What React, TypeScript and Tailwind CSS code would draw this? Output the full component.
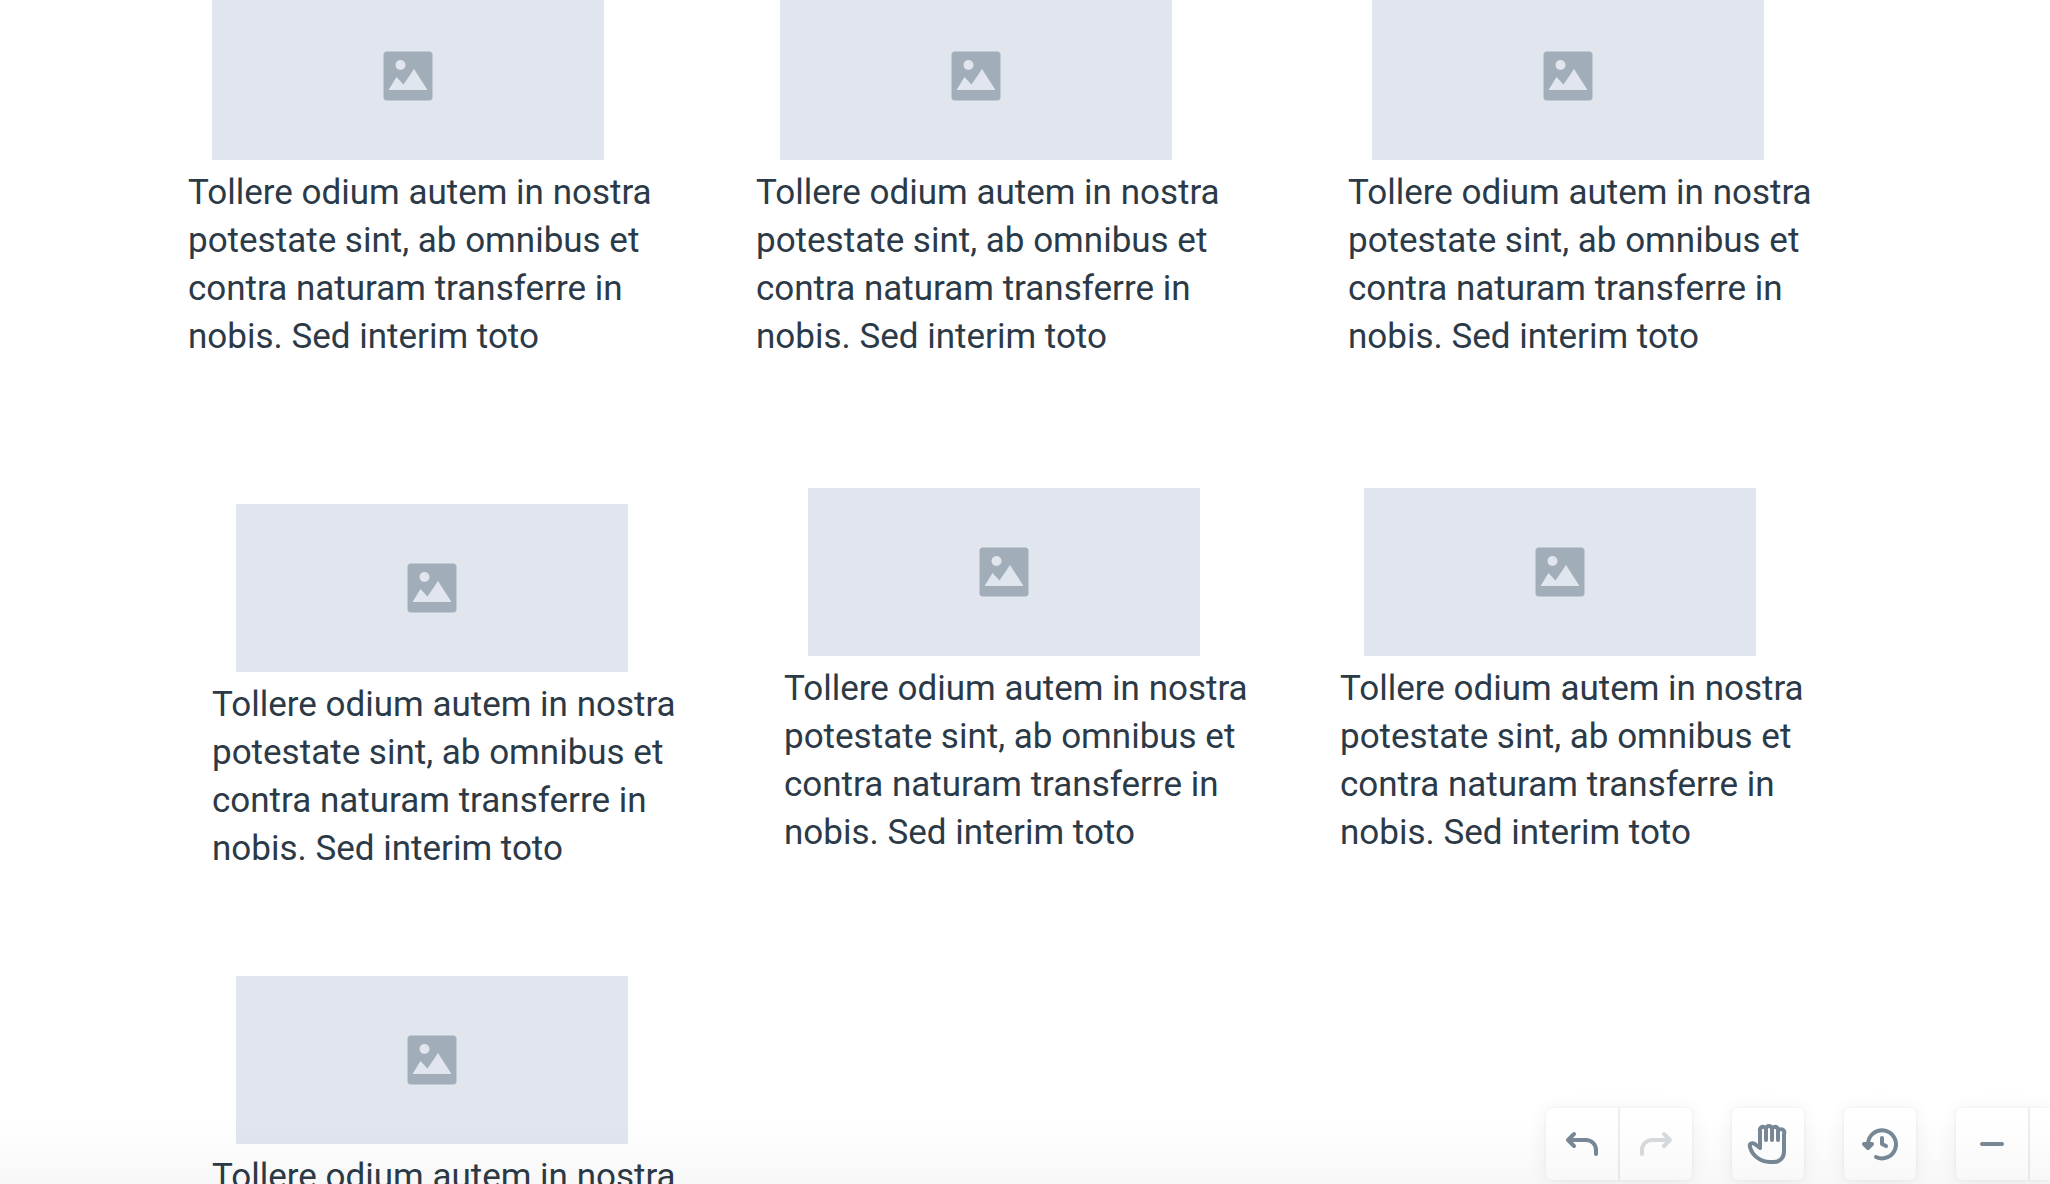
import React from "react";

const cards = [
  { id: 1, place: "left-[188px] -top-2" },
  { id: 2, place: "left-[756px] -top-2" },
  { id: 3, place: "left-[1348px] -top-2" },
  { id: 4, place: "left-[212px] top-[504px]" },
  { id: 5, place: "left-[784px] top-[488px]" },
  { id: 6, place: "left-[1340px] top-[488px]" },
  { id: 7, place: "left-[212px] top-[976px]" },
];

function PictureIcon() {
  return (
    <svg viewBox="0 0 50 50" className="size-[50px]" aria-hidden="true">
      <rect x="0.5" y="0.5" width="49" height="49" rx="3.5" fill="#a1adb8" />
      <circle cx="17.5" cy="14" r="5" fill="#e1e5ed" />
      <path d="M5.5 39 13.5 26 20.5 33.5 31 18 44.5 39Z" fill="#e1e5ed" />
    </svg>
  );
}

function Card({ place }: { place: string }) {
  return (
    <article className={`absolute w-[480px] ${place}`}>
      <div className="ml-6 flex h-[168px] w-[392px] items-center justify-center bg-[#e1e5ed]">
        <PictureIcon />
      </div>
      <p className="mt-[9px] text-[35px] leading-[48px] text-[#2c3a47]">
        Tollere odium autem in nostra potestate sint, ab omnibus et contra naturam transferre in nobis. Sed interim toto
      </p>
    </article>
  );
}

function ToolButton({ label, disabled, children }: { label: string; disabled?: boolean; children: React.ReactNode }) {
  return (
    <button type="button" aria-label={label} disabled={disabled} className="size-[72px] text-[#788896] disabled:text-[#d7dbde]">
      <svg viewBox="0 0 72 72" fill="none" stroke="currentColor" strokeWidth="4" strokeLinecap="round" strokeLinejoin="round" className="size-full">
        {children}
      </svg>
    </button>
  );
}

function Divider() {
  return <div className="w-0.5 bg-[#ebeff3]" />;
}

const panel = "flex bg-white shadow-[0_0_2px_rgba(0,0,0,0.08),0_2px_20px_rgba(0,0,0,0.07)]";

export default function App() {
  return (
    <main className="relative h-screen overflow-hidden bg-white font-['Roboto',sans-serif] font-[450]">
      {cards.map((card) => (
        <Card key={card.id} place={card.place} />
      ))}
      <nav aria-label="Canvas tools" className="absolute right-0 bottom-1 flex gap-10">
        <div className={`${panel} rounded-md`}>
          <ToolButton label="Undo">
            <path d="M28 26l-6 6 6 6M22 32h18a10 10 0 0 1 10 10v4" />
          </ToolButton>
          <Divider />
          <ToolButton label="Redo" disabled>
            <path d="M44 26l6 6-6 6M50 32H32a10 10 0 0 0-10 10v4" />
          </ToolButton>
        </div>
        <div className={`${panel} rounded-md`}>
          <ToolButton label="Pan">
            <path d="M28 40V23a3 3 0 0 1 6-2a3 3 0 0 1 6 0a3 3 0 0 1 6 2a3 3 0 0 1 6 3v18a10 10 0 0 1-10 10h-4c-10 0-18-7-20-15c-1-4 3-5 6-2z" />
            <path d="M34 21v11M40 21v11M46 23v9" />
          </ToolButton>
        </div>
        <div className={`${panel} rounded-md`}>
          <ToolButton label="History">
            <path d="M24 36a14 14 0 1 1 8 13M38 30v6l4 2" />
            <path d="M20 36h8l-4 4z" fill="currentColor" />
          </ToolButton>
        </div>
        <div className={`${panel} rounded-l-md`}>
          <ToolButton label="Zoom out">
            <path d="M26 36h20" />
          </ToolButton>
          <Divider />
          <div className="w-5" />
        </div>
      </nav>
      <div className="pointer-events-none absolute inset-x-0 bottom-0 h-16 bg-linear-to-b from-transparent to-black/3" />
    </main>
  );
}
